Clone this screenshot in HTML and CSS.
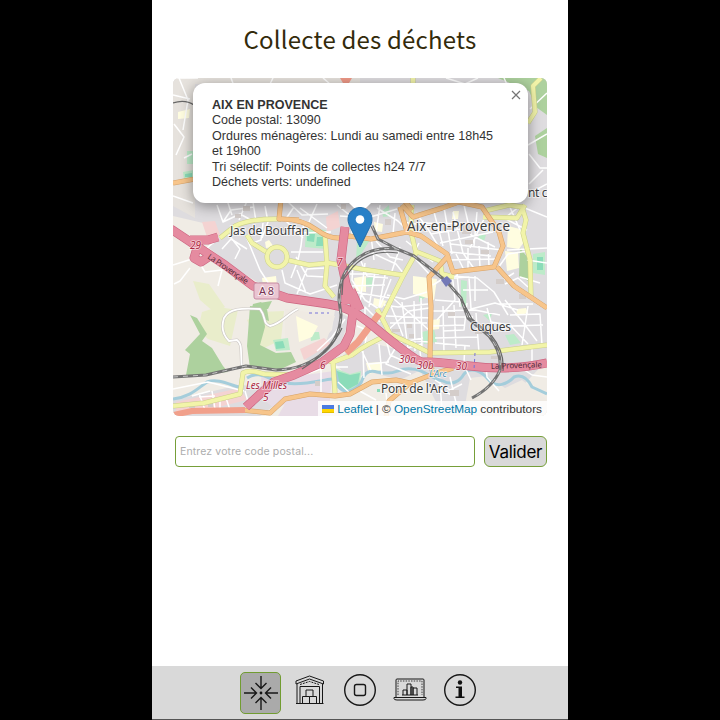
FILE: index.html
```
<!DOCTYPE html>
<html lang="fr">
<head>
<meta charset="utf-8">
<title>Collecte des déchets</title>
<link rel="stylesheet" href="styles.css">
</head>
<body>
<main class="app">
<h1>Collecte des déchets</h1>
<section class="map">
<svg class="tiles" viewBox="173 78 374 338" aria-label="Carte">
<rect x="173" y="78" width="374" height="338" fill="#f0ece5"/>
<g class="urban">
<path d="M173 78H547V360L500 410H440L420 370 400 352 367 323 335 307 286 300 238 270 209 248 216 226 173 216ZM335 310 350 318 340 345 326 361 305 360 320 342 332 330ZM360 340 400 350 421 370 400 380 370 372 350 380 335 363ZM173 400 240 385 265 387 275 405 260 416 173 416Z"/>
</g>
<g fill="#efeae3"><path d="M285 309 335 316 326 342 301 360 285 359ZM470 378 486 376 505 388 522 380 547 400V416H463Z"/></g>
<path fill="#e6e2dd" d="M173 78H360V84H195V218L173 206Z"/>
<path fill="#f09a88" d="M340 78H352L349 83H343Z"/>
<g fill="#f4d3d2"><path d="M202 222 215 221 220 235 208 240ZM326 217 338 211 340 227 327 232ZM176 402 240 388 247 400 210 409 176 413ZM300 349 324 338 331 344 304 360ZM354 205 368 203 365 219 353 220Z"/></g>
<g fill="#e8dce6"><path d="M261 373 298 376 334 371 330 394 297 396 276 410 262 398ZM290 395 330 397V416H278Z"/></g>
<g fill="#e9edcb"><path d="M193 281 209 284 225 307 215 313 200 300ZM202 312 218 307 238 310 230 346 208 339 198 330ZM247 320 260 312 284 311 281 340 260 350Z"/></g>
<g class="forest">
<path d="M190 315 197 318 207 334 202 341 212 348 223 366 228 372 197 375 186 375 190 354 185 350 200 334ZM250 306 263 307 265 327 260 345 276 353 291 352 296 362 281 369 250 368 247 346ZM520 248 528 258V281L519 276ZM253 304 261 302 267 309 269 321 250 315ZM498 78 547 78V115L536 107 529 91ZM535 136 547 128V158L538 154ZM253 304 272 301 268 309 254 310Z"/>
</g>
<g class="park"><path d="M337 369 350 374 361 371 360 385 345 392 335 387ZM306 228 326 230V249L305 247ZM357 239 370 240 356 262ZM273 340 288 338 290 350 276 351ZM420 278 426 279 427 296 419 302ZM461 280 467 281 466 307 461 306ZM187 151 194 151V164H187ZM183 172 194 170 195 180 184 180ZM533 254 545 252 545 275 533 273ZM480 234 486 235 484 241 478 238ZM483 315 492 313 490 321ZM422 332 434 329 437 342 424 344ZM505 335 514 334 521 343 510 345ZM310 332 319 332 320 339 311 341ZM366 278 373 277 372 287 365 286ZM382 211 389 205 390 216 383 217Z"/></g>
<g class="pitch"><path d="M307 234 315 234 314 242 307 241ZM317 237H323V246H316ZM275 342 283 341 285 348 276 349ZM185 174 192 173 192 177 185 177ZM537 257H543V270H537ZM377 389H380V392H377ZM337 371 350 375 360 373 358 384 345 391 336 385Z"/></g>
<g class="school"><path d="M508 226 520 229 526 239 519 249 507 247ZM413 276 437 279 434 300 413 294ZM354 278 366 276 366 292 355 291ZM262 278 276 276 277 285 263 286ZM178 112 190 109 189 118 178 119ZM366 363 382 362 381 370 369 374ZM296 316 318 326 312 337 299 342ZM374 222 383 224 382 232 375 231ZM453 211 459 211 458 219 452 219ZM505 251 518 253 519 268 507 271ZM430 320 440 319 439 329 429 330ZM517 309 526 308 528 313 516 316ZM374 298 387 301 382 308 373 305ZM265 242 269 240 274 247 266 248Z"/></g>
<g class="river">
<path d="M173 399C190 397 197 389 207 382 218 378 230 385 242 388M247 378C260 369 270 381 285 383 304 386 321 380 332 379M335 369 339 387C346 396 360 388 363 378 369 366 378 374 387 373 396 374 400 367 412 369 425 369 430 379 443 381 452 386 460 381 464 374 471 365 483 373 488 379 496 389 508 384 514 377 522 374 528 379 532 387L547 394"/>
</g>
<g class="streets">
<path d="M173 95 190 99M174 124 184 137 176 155M179 78 188 100 183 130M184 158 192 154M173 196 193 203M173 265 195 258 219 238M199 262 205 272 222 270 218 286M190 268 180 281 174 284M223 222 231 210 254 207M217 205 223 222 240 214 253 221M227 200 232 215M253 202 256 222M247 201 239 220M246 236 260 270 278 298M228 234 240 249 235 259M222 249 231 239 247 249M265 206 268 222 262 238M288 202 302 215 328 214M294 207 285 220 303 238M282 270 285 283 310 294 337 285M250 244 261 240 263 223M304 221 301 246 298 260 291 278M291 252 323 252M299 233 331 232M300 208 327 228M296 257 307 276 326 277M297 270 306 293M325 268 307 269 297 294M337 205 352 217 352 234"/>
<path d="M317 204 309 222M340 216 367 218 397 209M377 208 398 221 409 232M364 208 361 234M380 205 376 233M395 213 393 234M371 236 374 260M353 266 352 280 365 300 379 309M361 261 367 276 388 278M350 274 379 274M350 286 385 285M353 292 390 298M365 263 360 303M375 272 369 307M386 270 379 307M391 279 375 319M370 252 396 264 404 274M376 241 390 257 403 260M400 247 391 274M416 213 428 229 443 254M402 222 430 226M406 241 433 262M411 254 431 276M419 243 409 263M434 212 443 246M444 207 452 254M453 212 463 253 475 270M464 205 471 235 495 247M477 212 474 246M484 219 470 248M451 244 502 250M447 260 499 259M450 252 491 256M456 254 464 270M468 248 468 269M479 246 480 267M488 242 489 266M440 243 493 232M431 234 485 225M419 223 471 224"/>
<path d="M173 78 198 78M231 78 234 86M273 78 270 84M323 78 330 84M446 78 465 84 478 78M504 78 514 100M530 109 547 93M528 145 547 134M529 154 540 168 547 168M529 184 543 170M530 193 547 184M506 217 520 206 547 217M507 250 547 248M506 219 527 230M509 205 520 230M527 260 547 263M520 277 540 283M498 268 508 254 528 251M498 283 514 273M505 284 518 278 528 287M453 276 477 278 494 292 508 315M433 285 452 273 455 300 437 320M453 278 469 277 471 309 495 303 518 310M457 273 460 307M475 276 475 301M435 300 462 302M433 311 475 310 500 315M463 290 488 290M467 303 464 330 443 331M443 306 444 354M454 305 456 348M448 317 473 317M432 326 465 325M435 338 478 337M435 343 470 346M476 313 479 353M487 308 491 322 510 325 528 344M505 300 522 321 537 341M510 315 540 314 542 345M510 326 543 325M528 306 522 345M497 304 533 304"/>
<path d="M387 295 404 299 427 292M384 305 398 307 428 304M386 316 431 318M390 323 427 323M389 338 428 342M402 302 408 349M414 301 415 351M421 298 422 350M391 306 403 336M394 299 430 331M387 331 409 311 429 308M396 343 423 338M399 342 386 364 411 374M400 350 422 344M420 351 422 369M365 321 365 307 380 322M345 319 332 337 317 351M360 347 371 370M363 351 364 378M354 354 365 346 367 330 357 326M379 344 382 375M369 364 389 362M387 343 390 355 408 363M321 367 321 392M309 373 321 369M348 367 333 367M338 382 352 395M358 390 376 400M386 393 388 411M173 389 208 382 244 391M199 393 205 410M212 391 215 409M220 398 220 410M192 396 210 391M226 398 230 410M199 397 215 396M245 391 249 405M435 380 450 390 462 384M434 388 455 396M440 382 442 411M450 377 457 407M464 365 471 380M486 364 487 377 499 391M517 365 532 375 547 377M465 345 464 362M532 349 532 362"/>
<g id="lane"><path class="lane" d="M242 369C240 350 243 345 237 340L229 341C223 335 221 327 224 318 230 306 250 309 260 309 267 318 262 323 270 326 283 323 285 315 298 309"/><path class="lane-in" d="M242 369C240 350 243 345 237 340L229 341C223 335 221 327 224 318 230 306 250 309 260 309 267 318 262 323 270 326 283 323 285 315 298 309"/></g>
</g>
<g class="buildings"><path d="M235 214H241V218H235ZM243 206H250V211H243ZM275 227H285V231H275ZM259 282H267V287H259ZM341 204H346V209H341ZM352 223H360V226H352ZM385 219H391V225H385ZM400 205H406V210H400ZM443 225H453V230H443ZM462 225H471V234H462ZM465 240H473V244H465ZM481 250H489V254H481ZM496 279H504V284H496ZM519 294H526V299H519ZM448 312H455V316H448ZM475 329H482V334H475ZM392 329H400V332H392ZM407 324H412V328H407ZM409 334H414V338H409ZM189 402H195V408H189ZM208 402H213V407H208ZM315 381H320V386H315ZM450 390H459V396H450ZM491 356H501V359H491Z"/></g>
<g class="yellow-case"><path id="y" d="M220 238 235 226Q252 218 281 219M247 235 252 243 268 253M287 260 309 265 329 263 361 269 402 275M325 235 327 264 325 286 334 297M411 215 412 236 416 253 403 276 388 306 382 318 390 334Q366 344 352 355L333 362 326 360M333 362 335 393M382 318 377 309M390 334 414 345 430 353 490 352 547 345M415 251 440 261 442 274 454 277M484 211 509 205 522 207 526 220 523 233 530 260 531 297M173 406 204 403 240 394 243 373Q250 369 264 374L295 375 321 362M541 78 533 86 535 112 528 123M413 78V84M412 205 411 216M483 217 517 218 525 205"/></g>
<g class="yellow"><use href="#y"/></g>
<circle cx="277" cy="257" r="10" class="round-case"/><circle cx="277" cy="257" r="10" class="round"/>
<g class="orange-case"><path id="o" d="M281 199 279 219Q301 218 317 230T349 236L371 239 407 232 421 236 447 254 453 272 494 267 503 246 499 232 482 207 459 202 442 208 413 217 402 205M282 219 299 220M407 232 400 207M449 255 429 277 431 306 430 357 433 377M497 267 514 286 547 308M173 183 195 179M242 410 270 413 285 399 310 394 335 396 350 394 372 382 396 380 410 383 431 375 453 368M410 383 389 401 386 416M412 210 404 200"/></g>
<g class="orange"><use href="#o"/></g>
<path d="M346 353 358 342 379 314" class="trunk"/><path d="M173 415 192 411 245 410" class="trunk lower"/>
<g class="motor-case"><path id="m" d="M171 229 195 245 225 265 253 286 287 298 328 304Q350 307 368 322T403 350 425 362 470 366 547 363M345 227 341 260 346 284 356 308M353 312 350 334 344 346 321 363 294 375 274 382 259 395 246 407M345 284 346 304M351 290 360 310M190 240 208 240 218 237M197 248 194 258 201 262 210 256"/></g>
<g class="motor"><use href="#m"/></g>
<g class="rail-base"><path id="rail" d="M173 377 206 375Q223 371 246 366L276 370Q306 369 324 352 340 338 341 315L339 300Q339 276 352 263 369 246 397 249L414 256 431 269 447 282 461 298 468 318 489 336Q502 352 500 370 493 387 472 398M372 226 378 239 399 250"/></g>
<g class="rail"><use href="#rail"/></g>
<path d="M342 295 343 280 353 267Q369 249 398 253M463 302 472 319 491 335Q505 352 503 371M342 328Q332 350 302 369M173 103Q185 99 194 105" class="track"/>
<path d="M441 280 447 276 452 281 446 287Z" fill="#7379b7"/>
<path d="M309 313H329M475 353 474 370" stroke="#7772d9" stroke-width="1" stroke-dasharray="3 3" fill="none"/>
<rect x="254" y="283" width="25" height="16" rx="2" fill="#eac5d1" stroke="#c68ba2"/>
<g class="labels">
<text x="230" y="235" textLength="79" font-size="12">Jas de Bouffan</text>
<text x="407" y="231" textLength="103" font-size="13.500">Aix-en-Provence</text>
<text x="470" y="331" textLength="41" font-size="12">Cuques</text>
<text x="381" y="393" textLength="67" font-size="12">Pont de l'Arc</text>
<text x="528" y="197" font-size="12" textLength="19.500">nt c</text>
<text x="259" y="295" font-size="11" textLength="15" fill="#743250">A 8</text>
</g>
<g class="road-labels"><text x="190" y="249" font-size="10">29</text><text x="337" y="266" font-size="10">7</text><text x="320" y="369" font-size="10">6</text><text x="246" y="389" font-size="10" textLength="41">Les Milles</text><text x="263" y="401" font-size="10">5</text><text x="399" y="363" font-size="10">30a</text><text x="417" y="369" font-size="10">30b</text><text x="456" y="370" font-size="10">30</text></g>
<g class="small-labels"><text transform="translate(207 258) rotate(34)" textLength="47">La Provençale</text><text transform="translate(491 369) rotate(-2)" textLength="51">La Provençale</text><text x="429" y="377" class="water">L'Arc</text></g>
</svg>
<div class="popup">
<button class="close" aria-label="Fermer"><svg viewBox="0 0 10 10"><path d="M1 1 9 9M9 1 1 9"/></svg></button>
<strong>AIX EN PROVENCE</strong>
<p>Code postal: 13090</p><p>Ordures ménagères: Lundi au samedi entre 18h45</p><p>et 19h00</p><p>Tri sélectif: Points de collectes h24 7/7</p><p>Déchets verts: undefined</p>
</div>
<svg class="tip" viewBox="0 0 24 12"><path d="M0 0H24L12 12Z" fill="#fff"/></svg>
<svg class="pin" viewBox="0 0 25 41"><path d="M12.5.5C5.7.5.5 5.7.5 12.2c0 2.7.9 5.5 2.3 8.1L12.5 40l9.7-19.7c1.4-2.6 2.3-5.4 2.3-8.1C24.500 5.700 19.300.5 12.500.5Z" fill="#2880c7" stroke="#226da8"/><circle cx="12.500" cy="12.500" r="4.300" fill="#fff"/></svg>
<div class="attribution"><svg viewBox="0 0 12 8"><path fill="#4c7be1" d="M0 0h12v4H0z"/><path fill="#ffd500" d="M0 4h12v3H0z"/><path fill="#e0bc00" d="M0 7h12v1H0z"/></svg><a>Leaflet</a><span>|</span><span>©</span><a>OpenStreetMap</a><span>contributors</span></div>
</section>
<form class="search"><input placeholder="Entrez votre code postal..." aria-label="Code postal"><button type="button">Valider</button></form>
<nav>
<a class="item active"><svg viewBox="0 0 36 36"><path d="M18 1V13M12.500 8 18 13.500 23.500 8M18 35V23M12.500 28 18 22.500 23.500 28M1 18H13M8 12.500 13.500 18 8 23.500M35 18H23M28 12.500 22.500 18 28 23.500"/><circle cx="18" cy="18" r="1.400" fill="#111" stroke="none"/></svg></a>
<a class="item"><svg class="depot" viewBox="0 0 30 30"><path d="M1 6 14.500 1 28.500 6V9L14.500 4 1 9ZM2 9V28.500H5V11.500H24.500V28.500H27.500V9M7.500 28.500V21.500H14.500V28.500ZM14.500 21.500H21.500V28.500H14.500M11 21.500V15H18V21.500M1 28.500H28.500"/><path d="M5 9.500 14.500 6.500 24 9.500" stroke-dasharray="2 1"/></svg></a>
<a class="item"><svg viewBox="0 0 36 36"><circle cx="18" cy="18" r="15.300"/><rect x="12.500" y="12.500" width="11" height="11" rx="2"/></svg></a>
<a class="item"><svg class="laptop" viewBox="0 0 34 26"><path d="M3 20V3Q3 2 4 2H30Q31 2 31 3V20M1 20.500H33V21.500Q33 23 30 23H4Q1 23 1 21.500ZM10 18V13H14V18M14 18V7H18V18M18 18V10H20V18M20 18V11H24V18M9 18H25"/><path d="M5 18V4H29V18" stroke-width=".8" stroke-dasharray="1.500 1.200"/></svg></a>
<a class="item"><svg viewBox="0 0 36 36"><circle cx="18" cy="18" r="15.300"/><circle cx="18" cy="10.500" r="2.200" fill="#111" stroke="none"/><path d="M14 14.500H20V24.500H22.500V26H13.500V24.500H16.500V16H14Z" fill="#111" stroke="none"/></svg></a>
</nav>
</main>
</body>
</html>
```
FILE: styles.css
```
* { box-sizing: border-box; }
body { margin: 0; background: #000; font-family: "Liberation Sans", sans-serif; }
.app { width: 416px; height: 720px; margin: 0 auto; background: #fff; display: flex; flex-direction: column; }
h1 { margin: 0; height: 78px; flex: none; padding-top: 19px; text-align: center; font: 400 24px/39px "Noto Sans CJK JP", sans-serif; letter-spacing: .2px; color: #332b0b; }
.map { width: 374px; height: 338px; margin-left: 21px; position: relative; border-radius: 6px; overflow: hidden; flex: none; }
.tiles { display: block; width: 374px; height: 338px; }
.tiles g path, .track, .trunk { stroke-linejoin: round; }
.urban { fill: #dedcdf; }
.forest { fill: #add19e; }
.park { fill: #bdebc9; }
.pitch { fill: #8bdcb9; }
.school { fill: #fffde0; }
.buildings { fill: #d4cdca; }
.river { fill: none; stroke: #a4cddb; stroke-width: 3; }
.streets { fill: none; stroke: #fff; stroke-width: 1.5; }
.streets .lane { stroke: #cdc8c5; stroke-width: 3; }
.streets .lane-in { stroke: #fff; stroke-width: 1.8; }
.yellow-case { fill: none; stroke: #cbd08b; stroke-width: 5; }
.yellow { stroke: #f2f4a9; stroke-width: 4; fill: none; }
.round-case, .round { fill: none; stroke: #cbd08b; stroke-width: 5; }
.round { stroke: #f2f4a9; stroke-width: 4; }
.orange-case { fill: none; stroke: #d6a269; stroke-width: 5; }
.orange { fill: none; stroke: #f7c58b; stroke-width: 4; }
.motor-case { fill: none; stroke: #cc6580; stroke-width: 9; }
.motor { fill: none; stroke: #e58ba0; stroke-width: 7.8; }
.trunk { fill: none; stroke: #f1a08b; stroke-width: 7; }
.trunk.lower { stroke-width: 6; }
.rail-base { fill: none; stroke: #737373; stroke-width: 3; }
.rail { fill: none; stroke: #c9c9c9; stroke-width: 1; stroke-dasharray: 5 5; }
.track { fill: none; stroke: #686868; stroke-width: 1.2; }
.labels { fill: #3d3d3d; stroke: #ffffffb0; stroke-width: 2px; paint-order: stroke; font-family: "Noto Sans", sans-serif; }
.road-labels { fill: #ad2944; stroke: #fff9; stroke-width: 1.5px; paint-order: stroke; font-family: "Noto Sans", sans-serif; font-style: italic; }
.small-labels { fill: #542b38; font: 8px "Noto Sans", sans-serif; }
.small-labels .water { fill: #3f8fb4; font-size: 9px; font-style: italic; stroke: #fff; stroke-width: 1px; paint-order: stroke; }
.popup { position: absolute; left: 20px; top: 5px; width: 335px; height: 120px; padding: 14.500px 19px; border-radius: 12px; background: #fff; box-shadow: 0 3px 14px #0006; color: #333; font-size: 12.550px; line-height: 15.600px; white-space: nowrap; }
.popup strong { display: block; }
.popup p { margin: 0; }
.close { position: absolute; right: 7px; top: 7px; width: 10px; height: 10px; padding: 0; border: 0; background: none; }
.close svg { display: block; width: 10px; height: 10px; stroke: #757575; stroke-width: 1.200; }
.tip { position: absolute; left: 175px; top: 124px; width: 24px; height: 12px; }
.pin { position: absolute; left: 174px; top: 129px; width: 26px; height: 41px; }
.attribution { position: absolute; right: 0; bottom: 0; height: 15px; width: 229px; padding: 0 5px 0 4px; background: #fffc; display: flex; align-items: center; justify-content: space-between; font-size: 11.800px; color: #333; }
.attribution svg { width: 12px; height: 8px; }
.attribution a { color: #0078a8; }
.search { display: flex; gap: 9px; margin: 20px 0 0 23px; height: 31px; flex: none; }
.search input { width: 300px; border: 1px solid #769f39; border-radius: 4px; padding: 0 4px; font: 10.500px "Inter", sans-serif; letter-spacing: .13px; background: #fff; outline: 0; }
.search input::placeholder { color: #adadad; opacity: 1; }
.search button { width: 63px; border: 1px solid #769f39; border-radius: 6px; padding: 0; background: #d9d9d9; color: #000; font: 17px "Inter", sans-serif; letter-spacing: -.3px; }
nav { height: 54px; margin-top: auto; padding-top: 5px; background: #d9d9d9; border-bottom: 1px solid #555; display: flex; justify-content: center; gap: 8px; }
.item { width: 42px; height: 42px; display: flex; align-items: center; justify-content: center; padding-bottom: 4px; }
.item.active { background: #aaa; border: 1px solid #719c31; border-radius: 5px; padding: 0; margin: 1px 0 0 1px; width: 41px; }
.item svg { width: 36px; height: 36px; flex: none; fill: none; stroke: #171717; stroke-width: 1.400; }
.item .depot { width: 30px; height: 30px; stroke-width: 1; }
.item .laptop { width: 34px; height: 26px; stroke-width: 1; }
```
